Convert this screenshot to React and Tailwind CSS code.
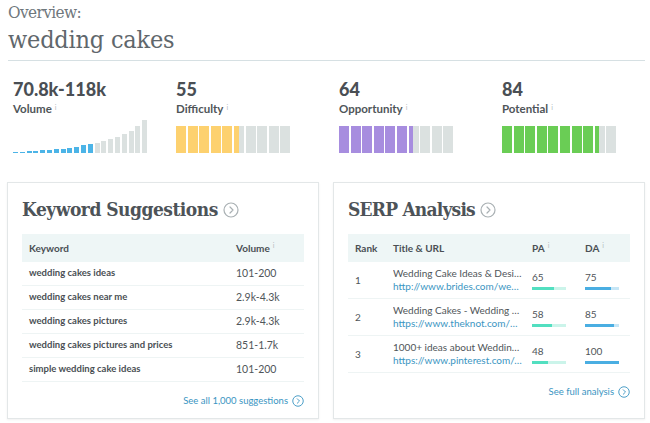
const volumeBars = [1.5, 1.5, 2, 2, 3, 3, 3.7, 4.3, 5, 5.7, 7.7, 8.7, 10, 12, 13.7, 16.3, 19, 22.3, 26.7, 32.7];

const metrics = [
  { value: '70.8k-118k', label: 'Volume', kind: 'volume' },
  { value: '55', label: 'Difficulty', color: 'bg-[#fdd16f]', score: 55 },
  { value: '64', label: 'Opportunity', color: 'bg-[#a78ddf]', score: 64 },
  { value: '84', label: 'Potential', color: 'bg-[#6acd55]', score: 84 },
];

const keywords = [
  ['wedding cakes ideas', '101-200'],
  ['wedding cakes near me', '2.9k-4.3k'],
  ['wedding cakes pictures', '2.9k-4.3k'],
  ['wedding cakes pictures and prices', '851-1.7k'],
  ['simple wedding cake ideas', '101-200'],
];

const serp = [
  { rank: 1, title: 'Wedding Cake Ideas & Designs | Brides', url: 'http://www.brides.com/wedding-cakes', pa: 65, da: 75 },
  { rank: 2, title: 'Wedding Cakes - Wedding Cake Ideas', url: 'https://www.theknot.com/wedding-cakes', pa: 58, da: 85 },
  { rank: 3, title: '1000+ ideas about Wedding Cakes', url: 'https://www.pinterest.com/explore/wedding', pa: 48, da: 100 },
];

const slab = "font-['DejaVu_Serif_Condensed','DejaVu_Serif',serif] font-stretch-condensed";

function Info() {
  return <sup className="ml-[3px] text-[7px] font-normal text-[#b5bcbf]">i</sup>;
}

function CircleArrow({ className }) {
  return (
    <svg viewBox="0 0 16 16" className={className} fill="none" stroke="currentColor" strokeWidth="1.2">
      <circle cx="8" cy="8" r="7" />
      <path d="M7 5l3 3-3 3" strokeLinecap="round" strokeLinejoin="round" />
    </svg>
  );
}

function ScoreBars({ score, color }) {
  return (
    <div className="flex h-[27px] gap-[1.6px]">
      {Array.from({ length: 10 }).map((_, i) => {
        const fill = Math.max(0, Math.min(1, score / 10 - i));
        return (
          <div key={i} className="relative w-[10px] bg-[#dbe1e0]">
            <div className={`absolute inset-y-0 left-0 ${color}`} style={{ width: `${fill * 100}%` }} />
          </div>
        );
      })}
    </div>
  );
}

function VolumeChart() {
  return (
    <div className="flex h-[33px] items-end gap-[1.8px]">
      {volumeBars.map((h, i) => (
        <div
          key={i}
          className={`w-[5px] ${i < 12 ? 'bg-[#4cb4e7]' : 'bg-[#dbe1e0]'}`}
          style={{ height: `${h}px` }}
        />
      ))}
    </div>
  );
}

function MiniBar({ value, fg, bg }) {
  return (
    <div className={`mt-[3px] h-[3px] w-[34px] ${bg}`}>
      <div className={`h-full ${fg}`} style={{ width: `${value}%` }} />
    </div>
  );
}

export default function App() {
  return (
    <div className="h-[423px] w-[650px] overflow-hidden bg-white font-['Lato',sans-serif] text-[#4b5156]">
      <div className="px-2 pt-[1px]">
        <div className={`${slab} text-[17px] font-light leading-[22px] tracking-[-0.6px] text-[#6f777c]`}>Overview:</div>
        <div className={`${slab} mt-[2px] text-[25px] font-light leading-[30px] tracking-[-0.2px] text-[#5f676c]`}>
          wedding cakes
        </div>
        <div className="mt-[5px] h-px w-[637px] bg-[#d6e0e3]" />
      </div>

      <div className="mt-[17px] grid grid-cols-[163px_163px_163px_150px] pl-[13px]">
        {metrics.map((m) => (
          <div key={m.label}>
            <div className="text-[18px] font-black leading-[22px] text-[#4a4f54]">{m.value}</div>
            <div className="mt-[1px] text-[11.5px] font-bold leading-[16px] text-[#4f5559]">
              {m.label}
              <Info />
            </div>
            <div className="mt-[3px] flex h-[33px] items-end">
              {m.kind === 'volume' ? <VolumeChart /> : <ScoreBars score={m.score} color={m.color} />}
            </div>
          </div>
        ))}
      </div>

      <div className="mt-[29px] flex gap-[14px] pl-[7px]">
        <div className="flex h-[237px] w-[312px] flex-col border border-[#e3e7e8] px-[14px] pt-[12px] shadow-[0_1px_2px_rgba(0,0,0,0.06)]">
          <div className="flex items-center gap-[5px]">
            <span className={`${slab} text-[19px] font-bold leading-[28px] tracking-[-0.5px] text-[#4d5358]`}>
              Keyword Suggestions
            </span>
            <CircleArrow className="mt-[2px] h-[16px] w-[16px] text-[#a9b0b3]" />
          </div>
          <div className="mt-[11px]">
            <div className="flex h-[28px] items-center bg-[#eef6f6] px-[7px] text-[10px] font-bold text-[#4a4f54]">
              <span className="flex-1">Keyword</span>
              <span className="w-[61px]">
                Volume
                <Info />
              </span>
            </div>
            {keywords.map(([k, v]) => (
              <div key={k} className="flex h-[24px] items-center border-b border-[#eef4f4] px-[7px]">
                <span className="flex-1 text-[9.5px] font-bold text-[#4a4f54]">{k}</span>
                <span className="w-[61px] text-[10.5px] text-[#4f5559]">{v}</span>
              </div>
            ))}
          </div>
          <div className="mt-[12px] flex items-center justify-end gap-[4px] text-[9.5px] text-[#3a95c2]">
            See all 1,000 suggestions
            <CircleArrow className="h-[12px] w-[12px]" />
          </div>
        </div>

        <div className="flex h-[237px] w-[312px] flex-col border border-[#e3e7e8] px-[14px] pt-[12px] shadow-[0_1px_2px_rgba(0,0,0,0.06)]">
          <div className="flex items-center gap-[5px]">
            <span className={`${slab} text-[19px] font-bold leading-[28px] tracking-[-0.8px] text-[#4d5358]`}>
              SERP Analysis
            </span>
            <CircleArrow className="mt-[2px] h-[16px] w-[16px] text-[#a9b0b3]" />
          </div>
          <div className="mt-[11px] text-[10px]">
            <div className="flex h-[28px] items-center bg-[#eef6f6] px-[7px] font-bold text-[#4a4f54]">
              <span className="w-[38px]">Rank</span>
              <span className="w-[139px]">Title &amp; URL</span>
              <span className="w-[53px]">
                PA
                <Info />
              </span>
              <span>
                DA
                <Info />
              </span>
            </div>
            {serp.map((r) => (
              <div key={r.rank} className="flex h-[37px] items-center border-b border-[#eef4f4] px-[7px]">
                <span className="w-[38px] text-[#4f5559]">{r.rank}</span>
                <div className="w-[139px] pr-[8px] leading-[13px]">
                  <div className="truncate text-[#4f5559]">{r.title}</div>
                  <div className="truncate text-[#3a95c2]">{r.url}</div>
                </div>
                <div className="w-[53px] leading-[13px] text-[#4f5559]">
                  <div>{r.pa}</div>
                  <MiniBar value={r.pa} fg="bg-[#52dfc0]" bg="bg-[#cbf4ea]" />
                </div>
                <div className="leading-[13px] text-[#4f5559]">
                  <div>{r.da}</div>
                  <MiniBar value={r.da} fg="bg-[#4aaee2]" bg="bg-[#c6e6f6]" />
                </div>
              </div>
            ))}
          </div>
          <div className="mt-[12px] flex items-center justify-end gap-[4px] text-[9.5px] text-[#3a95c2]">
            See full analysis
            <CircleArrow className="h-[12px] w-[12px]" />
          </div>
        </div>
      </div>
    </div>
  );
}
